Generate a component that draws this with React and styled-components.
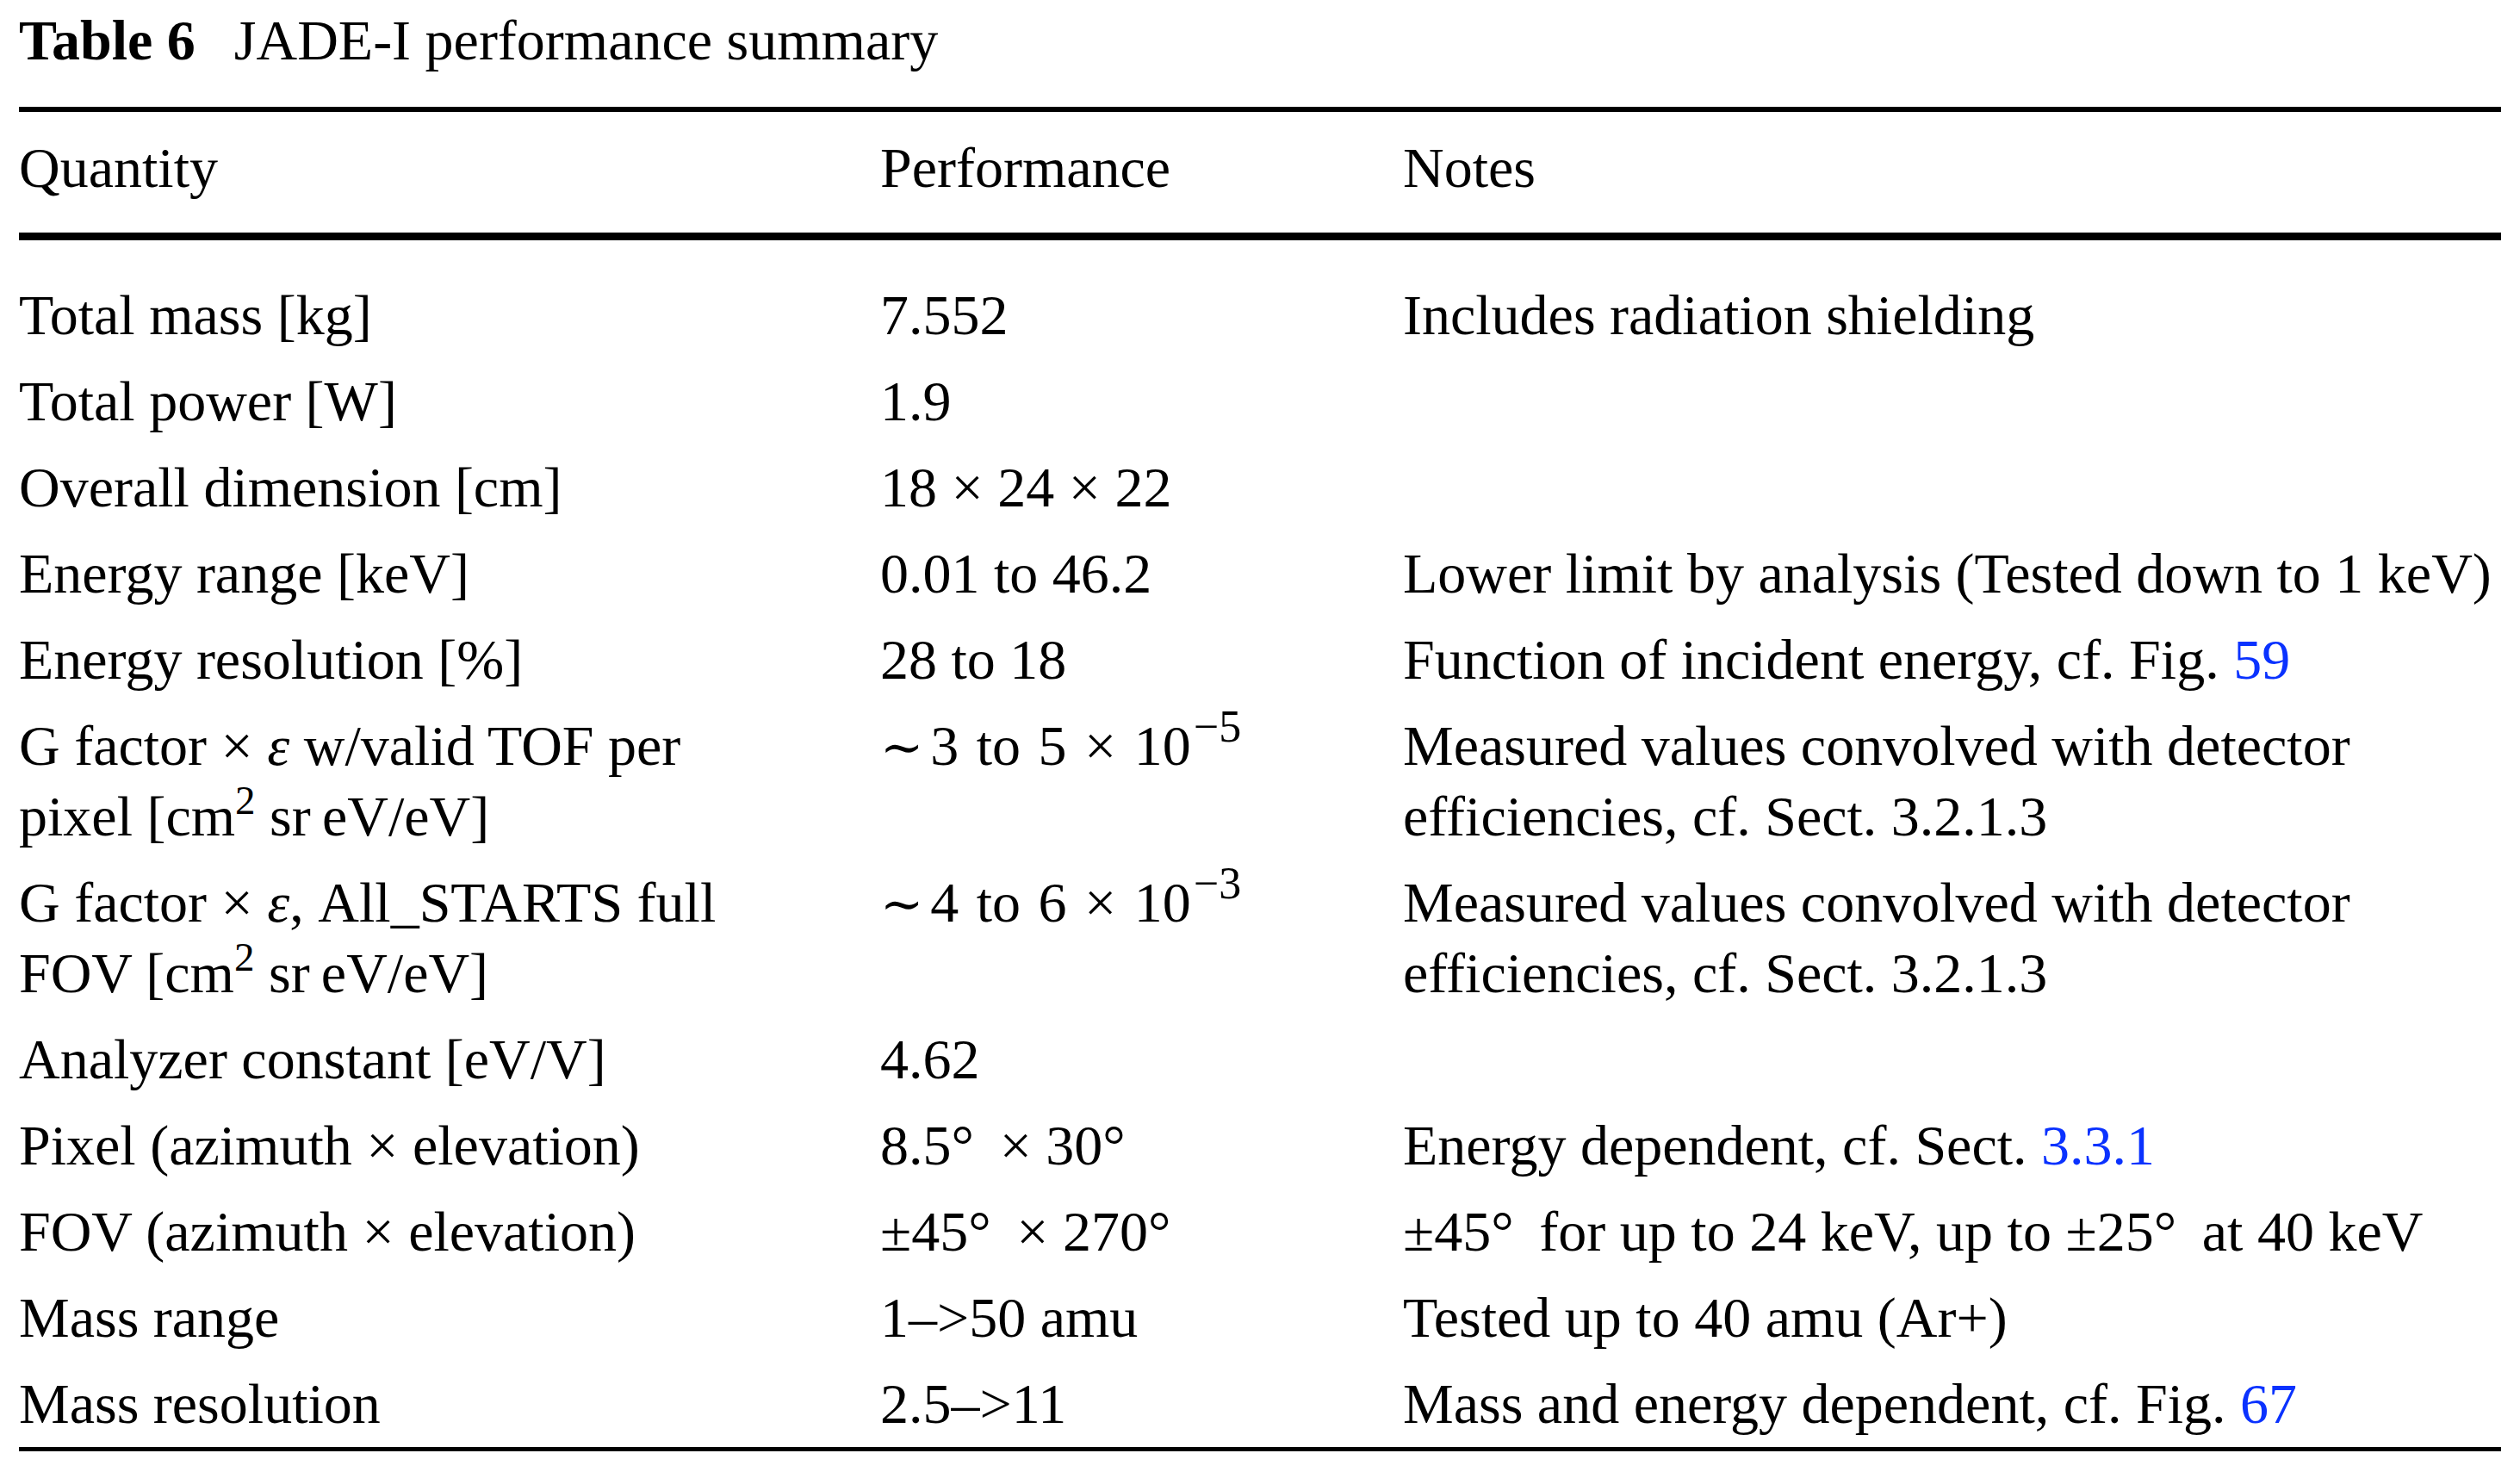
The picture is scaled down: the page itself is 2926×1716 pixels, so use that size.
import React from 'react';
import styled, { createGlobalStyle } from 'styled-components';

const GlobalStyle = createGlobalStyle`
  html, body {
    margin: 0;
    padding: 0;
    background: #ffffff;
  }
  body {
    font-family: "Liberation Serif", "Times New Roman", "DejaVu Serif", serif;
    color: #000000;
  }
`;

const Page = styled.div`
  width: 2882px;
  padding: 6px 22px 30px;
  font-size: 66px;
  line-height: 82px;
`;

const Caption = styled.div`
  margin-bottom: 36px;
  white-space: nowrap;
`;

const CaptionLabel = styled.span`
  font-weight: bold;
  margin-right: 45px;
`;

const Rule = styled.div`
  height: ${(p) => p.$thick}px;
  background: #000000;
`;

const Row = styled.div`
  display: grid;
  grid-template-columns: 1000px 607px 1fr;
  padding: ${(p) => (p.$head ? '24px 0 34px' : '9px 0')};
`;

const Body = styled.div`
  padding-top: 37px;
`;

const Cell = styled.div`
  white-space: nowrap;
`;

// math-mode values get a little more room between tokens
const MathCell = styled(Cell)`
  word-spacing: 4px;
`;

const Sup = styled.span`
  font-size: ${(p) => (p.$big ? 52 : 47)}px;
  line-height: 0;
  vertical-align: ${(p) => (p.$big ? 27 : 25)}px;
  margin-left: ${(p) => (p.$big ? 3 : 0)}px;
`;

const Tilde = styled.span`
  font-family: "DejaVu Serif", serif;
  font-size: 60px;
  margin-right: 8px;
`;

const Eps = styled.i`
  font-style: italic;
`;

const Ref = styled.span`
  color: #0a32ff;
`;

const THIN = '\u2009';

const rows = [
  ['Total mass [kg]', '7.552', 'Includes radiation shielding'],
  ['Total power [W]', '1.9', ''],
  ['Overall dimension [cm]', '18 × 24 × 22', ''],
  ['Energy range [keV]', '0.01 to 46.2', 'Lower limit by analysis (Tested down to 1 keV)'],
  ['Energy resolution [%]', '28 to 18', <>Function of incident energy, cf. Fig. <Ref>59</Ref></>],
  [
    <>G factor × <Eps>ε</Eps> w/valid TOF per<br />pixel [cm<Sup>2</Sup> sr{THIN}eV/eV]</>,
    <><Tilde>∼</Tilde>3 to 5 × 10<Sup $big>−5</Sup></>,
    <>Measured values convolved with detector<br />efficiencies, cf. Sect. 3.2.1.3</>,
    true,
  ],
  [
    <>G factor × <Eps>ε</Eps>, All_STARTS full<br />FOV [cm<Sup>2</Sup> sr{THIN}eV/eV]</>,
    <><Tilde>∼</Tilde>4 to 6 × 10<Sup $big>−3</Sup></>,
    <>Measured values convolved with detector<br />efficiencies, cf. Sect. 3.2.1.3</>,
    true,
  ],
  ['Analyzer constant [eV/V]', '4.62', ''],
  ['Pixel (azimuth × elevation)', <>8.5°{THIN} × 30°</>, <>Energy dependent, cf. Sect. <Ref>3.3.1</Ref></>],
  ['FOV (azimuth × elevation)', <>±45°{THIN} × 270°</>, <>±45°{THIN} for up to 24 keV, up to ±25°{THIN} at 40 keV</>],
  ['Mass range', '1–>50 amu', 'Tested up to 40 amu (Ar+)'],
  ['Mass resolution', '2.5–>11', <>Mass and energy dependent, cf. Fig. <Ref>67</Ref></>],
];

export default function App() {
  return (
    <>
      <GlobalStyle />
      <Page>
        <Caption>
          <CaptionLabel>Table 6</CaptionLabel>JADE-I performance summary
        </Caption>
        <Rule $thick={6} />
        <Row $head>
          <Cell>Quantity</Cell>
          <Cell>Performance</Cell>
          <Cell>Notes</Cell>
        </Row>
        <Rule $thick={9} />
        <Body>
          {rows.map((r, i) => (
            <Row key={i}>
              <Cell>{r[0]}</Cell>
              {r[3] ? <MathCell>{r[1]}</MathCell> : <Cell>{r[1]}</Cell>}
              <Cell>{r[2]}</Cell>
            </Row>
          ))}
        </Body>
        <Rule $thick={5} />
      </Page>
    </>
  );
}
